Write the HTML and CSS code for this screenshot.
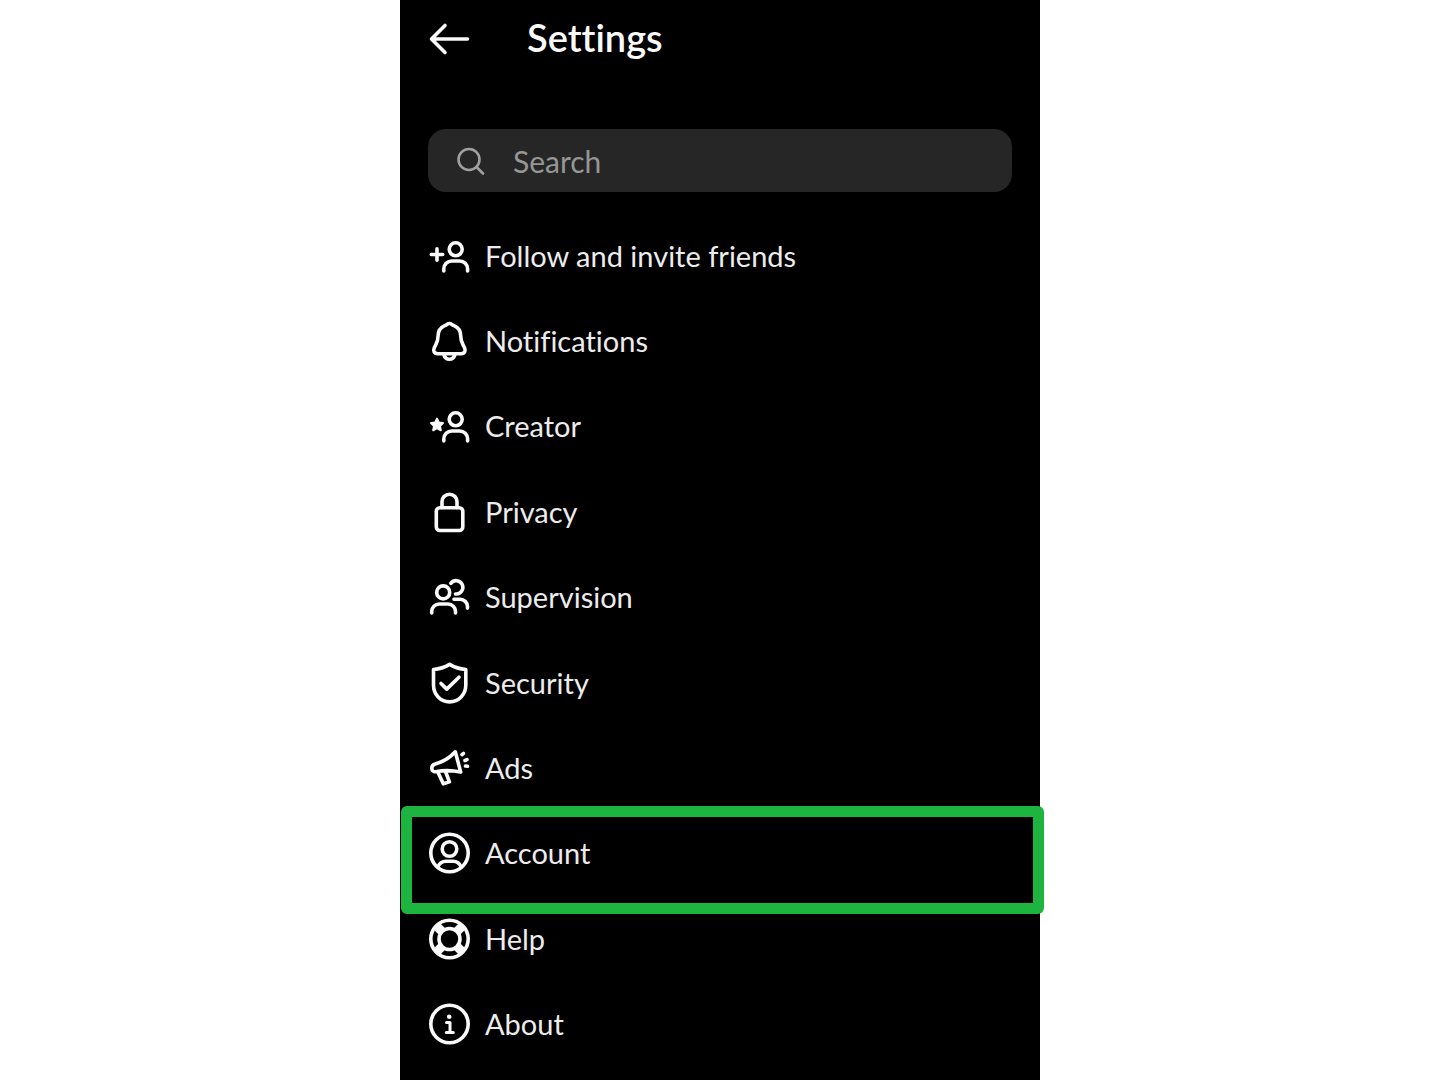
FILE: index.html
```html
<!DOCTYPE html>
<html lang="en">
<head>
<meta charset="utf-8">
<meta name="viewport" content="width=device-width, initial-scale=1">
<title>Settings</title>
<link rel="stylesheet" href="styles.css">
</head>
<body>
<main class="screen">
  <header class="topbar">
    <button class="back" type="button" aria-label="Back">
      <svg class="icon" viewBox="0 0 42 42"><path d="M39.500 21H4M17 7.500L3.500 21L17 34.500"/></svg>
    </button>
    <h1 class="title">Settings</h1>
  </header>
  <label class="search">
    <svg class="search-icon" viewBox="0 0 30 30" aria-hidden="true"><circle cx="13" cy="13.500" r="10.500"/><path d="M20.500 21L27 27.500"/></svg>
    <input class="search-input" type="search" placeholder="Search" aria-label="Search">
  </label>
  <nav class="menu" aria-label="Settings">
    <a class="item" href="#follow">
      <svg class="icon" viewBox="0 0 42 42"><circle cx="27.700" cy="14.300" r="6.500"/><path d="M15.800 36V34a8 8 0 0 1 8-8h7.800a8 8 0 0 1 8 8v2M9 13.800v11.400M3.300 19.500h11.400"/></svg>
      <span>Follow and invite friends</span>
    </a>
    <a class="item" href="#notifications">
      <svg class="icon" viewBox="0 0 42 42"><path d="M21.400 3.500C19.500 3.500 18.600 4.900 16.700 5.700C12.500 7.500 10.200 11.300 10.100 15.800C10 19.300 9.600 21.500 7.900 24.500L6.300 27.700C4.600 31.300 6.500 33.700 9.600 33.700H33.200C36.300 33.700 38.200 31.300 36.500 27.700L34.900 24.500C33.200 21.500 32.800 19.300 32.700 15.800C32.600 11.300 30.300 7.500 26.100 5.700C24.200 4.900 23.300 3.500 21.400 3.500ZM15.800 34.500C16.600 37.400 18.600 39.300 21.400 39.300S26.200 37.400 27 34.500"/></svg>
      <span>Notifications</span>
    </a>
    <a class="item" href="#creator">
      <svg class="icon" viewBox="0 0 42 42"><circle cx="27.700" cy="14.300" r="6.500"/><path d="M15.800 36V34a8 8 0 0 1 8-8h7.800a8 8 0 0 1 8 8v2"/><path class="solid" d="M9 13.600L10.900 17.500L15 18L12 21L12.800 25.300L9 23.200L5.200 25.300L6 21L3 18L7.100 17.500Z"/></svg>
      <span>Creator</span>
    </a>
    <a class="item" href="#privacy">
      <svg class="icon" viewBox="0 0 42 42"><rect x="8.300" y="16.700" width="26.500" height="22.800" rx="3.500"/><path d="M14 16.500V10.700a7.500 7.500 0 0 1 15 0V16.500"/></svg>
      <span>Privacy</span>
    </a>
    <a class="item" href="#supervision">
      <svg class="icon" viewBox="0 0 42 42"><circle cx="15.200" cy="16.400" r="6.500"/><path d="M3.700 37V35.500a7.500 7.500 0 0 1 7.500-7.500h8.800a7.500 7.500 0 0 1 7.500 7.500v1.500M22.800 7.300A6.700 6.700 0 1 1 27.500 18M26 23.200h6a7.500 7.500 0 0 1 7.500 7.500v1.400"/></svg>
      <span>Supervision</span>
    </a>
    <a class="item" href="#security">
      <svg class="icon" viewBox="0 0 42 42"><path d="M21.600 2.400C17 5.200 11.500 7.100 5.500 7.500V23C5.500 32.500 12.500 39.900 21.600 39.900S37.800 32.500 37.800 23V7.500C31.800 7.100 26.200 5.200 21.600 2.400ZM13 21.500L18.700 27.100L31 15.200"/></svg>
      <span>Security</span>
    </a>
    <a class="item" href="#ads">
      <svg class="icon" viewBox="0 0 42 42"><path d="M27.300 4.800L32.700 25.100C24 23.200 15 23.300 7.500 24.700C5 25.200 3.900 23.200 3.800 21.300C3.700 18.800 5 17.500 7.300 16.900C15 15 22 10.500 27.300 4.800ZM9.800 25L15.300 36.800L21.400 34.900L17.700 25M34 7.700L35.400 6.500M37 13.500L39 12.700M37.500 19L39.500 19.200"/></svg>
      <span>Ads</span>
    </a>
    <a class="item highlighted" href="#account">
      <svg class="icon" viewBox="0 0 42 42"><circle cx="21.500" cy="21" r="18.700"/><circle cx="21.500" cy="17" r="7.300"/><path d="M9.800 35C11.500 31 14.500 29.300 18 29.300H25C28.500 29.300 31.500 31 33.200 35"/></svg>
      <span>Account</span>
    </a>
    <a class="item" href="#help">
      <svg class="icon" viewBox="0 0 42 42"><circle cx="21.500" cy="21" r="18.700"/><circle cx="21.500" cy="21" r="10.500"/><path class="thick" d="M14.500 14L8.500 8M28.500 14L34.500 8M14.500 28L8.500 34M28.500 28L34.500 34"/></svg>
      <span>Help</span>
    </a>
    <a class="item" href="#about">
      <svg class="icon" viewBox="0 0 42 42"><circle cx="21.500" cy="21" r="18.700"/><circle class="solid" cx="21.200" cy="13.700" r="1.300"/><path class="stem" d="M18.500 19.500H22V29.500M18.300 29.500H25.300"/></svg>
      <span>About</span>
    </a>
  </nav>
</main>
</body>
</html>
```
FILE: styles.css
```css
* {
  box-sizing: border-box;
}

body {
  margin: 0;
  background: #fff;
  font-family: Lato, "Open Sans", sans-serif;
  font-variant-ligatures: none;
}

.screen {
  display: flex;
  flex-direction: column;
  width: 100%;
  max-width: 640px;
  min-height: 100vh;
  margin: 0 auto;
  padding-bottom: 13px;
  background: #000;
  color: #fafafa;
}

.topbar {
  display: flex;
  align-items: center;
  gap: 57px;
  padding: 13px 28px 0;
}

.back {
  display: flex;
  padding: 5px 0 0;
  border: 0;
  background: none;
  color: inherit;
}

.title {
  margin: 0;
  font-size: 38px;
  font-weight: 600;
  line-height: 46px;
}

.icon,
.search-icon {
  flex: none;
  fill: none;
  stroke: currentColor;
  stroke-linecap: round;
  stroke-linejoin: round;
}

.icon {
  width: 42px;
  height: 42px;
  stroke-width: 3.6;
}

.solid {
  fill: currentColor;
  stroke-width: 2;
}

.stem {
  stroke-width: 3;
}

.thick {
  stroke-width: 9;
  stroke-linecap: butt;
}

.search {
  display: flex;
  align-items: center;
  gap: 27px;
  height: 63px;
  margin: 69px 28px 21px;
  padding: 0 28px;
  border-radius: 18px;
  background: #262626;
  color: #a0a0a0;
}

.search-icon {
  width: 30px;
  height: 30px;
  stroke-width: 2.6;
}

.search-input {
  flex: 1;
  min-width: 0;
  padding: 0;
  border: 0;
  outline: 0;
  background: none;
  color: #f5f5f5;
  font: inherit;
  font-size: 30px;
  line-height: 36px;
}

.search-input::placeholder {
  color: #969696;
  opacity: 1;
}

.menu {
  display: grid;
  flex: 1;
  grid-auto-rows: 1fr;
}

.item {
  position: relative;
  display: flex;
  align-items: center;
  gap: 15px;
  min-height: 64px;
  padding: 0 28px;
  color: inherit;
  font-size: 29px;
  line-height: 36px;
  text-decoration: none;
}

.item span {
  color: #ececec;
}

/* Marker frame drawn over the row and its neighbours */
.highlighted::after {
  content: "";
  position: absolute;
  inset: -5px -4px -18px 1px;
  border: 11px solid #1db440;
  border-radius: 6px;
}
```
